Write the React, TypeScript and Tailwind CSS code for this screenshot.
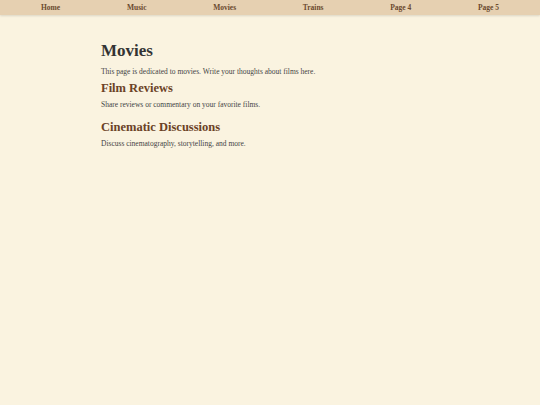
const navItems = ["Home", "Music", "Movies", "Trains", "Page 4", "Page 5"];

export default function App() {
  return (
    <div
      className="min-h-[405px] w-full bg-[#faf3e0] text-[#333] antialiased"
      style={{ fontFamily: '"Liberation Serif", Georgia, serif' }}
    >
      <nav className="flex h-[15px] items-center justify-between bg-[#e6d0b1] px-[41px] shadow-[0_1px_2px_rgba(0,0,0,0.12)]">
        {navItems.map((item) => (
          <a key={item} className="text-[7.5px] font-bold text-[#6b4a2f]">
            {item}
          </a>
        ))}
      </nav>

      <main className="ml-[101px] w-[338px] pt-[26px]">
        <h1 className="text-[17px] font-bold leading-[20px] text-[#333]">Movies</h1>
        <p className="mt-[6px] text-[7.5px] leading-[9px] text-[#444]">
          This page is dedicated to movies. Write your thoughts about films here.
        </p>

        <section className="mt-[4px]">
          <h2 className="text-[12.5px] font-bold leading-[16px] text-[#6b4226]">Film Reviews</h2>
          <p className="mt-[4px] text-[7.5px] leading-[9px] text-[#444]">
            Share reviews or commentary on your favorite films.
          </p>
        </section>

        <section className="mt-[10px]">
          <h2 className="text-[12.5px] font-bold leading-[16px] text-[#6b4226]">Cinematic Discussions</h2>
          <p className="mt-[4px] text-[7.5px] leading-[9px] text-[#444]">
            Discuss cinematography, storytelling, and more.
          </p>
        </section>
      </main>
    </div>
  );
}
